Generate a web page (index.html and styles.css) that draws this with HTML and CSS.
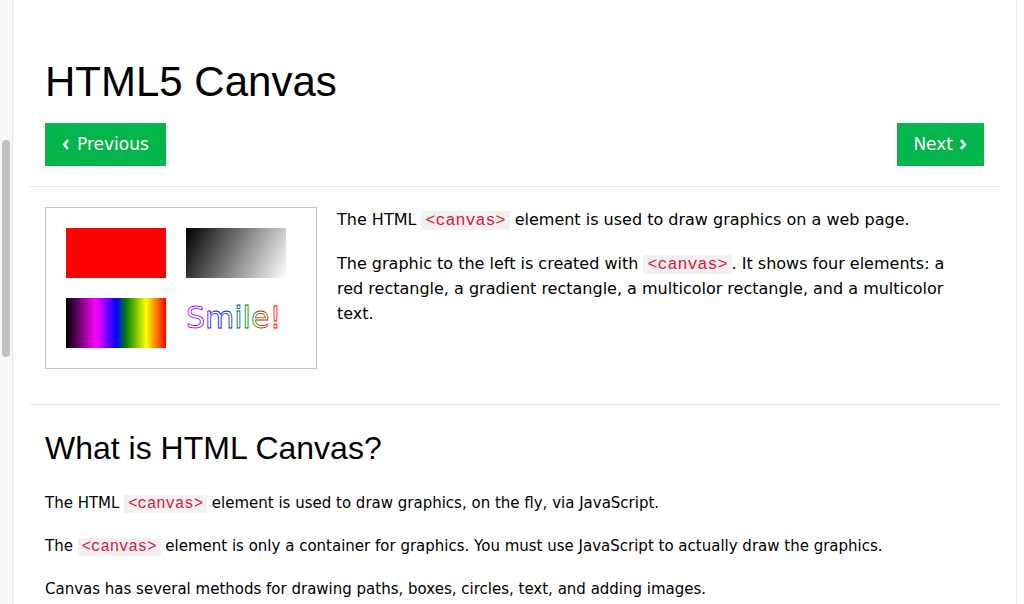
FILE: index.html
```html
<!DOCTYPE html>
<html lang="en">
<head>
<meta charset="utf-8">
<title>HTML5 Canvas</title>
<link rel="stylesheet" href="styles.css">
</head>
<body>
<div class="page">
  <aside class="gutter"><div class="thumb"></div></aside>
  <main class="main">
    <section class="intro">
      <h1>HTML5 Canvas</h1>
      <nav class="pager">
        <a class="btn btn-prev" href="#"><svg class="chev" width="8" height="11" viewBox="0 0 8 11"><path d="M6 1.2 L2.2 5.5 L6 9.8" fill="none" stroke="#fff" stroke-width="2.6"/></svg>Previous</a>
        <a class="btn btn-next" href="#">Next<svg class="chev" width="8" height="11" viewBox="0 0 8 11"><path d="M2 1.2 L5.8 5.5 L2 9.8" fill="none" stroke="#fff" stroke-width="2.6"/></svg></a>
      </nav>
    </section>
    <hr class="rule">
    <section class="demo">
      <div class="canvas-box">
        <svg width="270" height="160" viewBox="0 0 270 160">
          <defs>
            <linearGradient id="gray" gradientUnits="userSpaceOnUse" x1="140" y1="20" x2="240" y2="70">
              <stop offset="0" stop-color="#000"/>
              <stop offset="1" stop-color="#fff"/>
            </linearGradient>
            <linearGradient id="rainbow" gradientUnits="userSpaceOnUse" x1="20" y1="0" x2="120" y2="0">
              <stop offset="0" stop-color="#000"/>
              <stop offset="0.3" stop-color="#f0f"/>
              <stop offset="0.5" stop-color="#00f"/>
              <stop offset="0.6" stop-color="#008000"/>
              <stop offset="0.8" stop-color="#ff0"/>
              <stop offset="1" stop-color="#f00"/>
            </linearGradient>
            <linearGradient id="smile" gradientUnits="userSpaceOnUse" x1="140" y1="0" x2="235" y2="0">
              <stop offset="0" stop-color="#c0f"/>
              <stop offset="0.37" stop-color="#00f"/>
              <stop offset="0.65" stop-color="#008000"/>
              <stop offset="0.9" stop-color="#f00"/>
              <stop offset="1" stop-color="#f00"/>
            </linearGradient>
          </defs>
          <rect x="20" y="20" width="100" height="50" fill="#f00"/>
          <rect x="140" y="20" width="100" height="50" fill="url(#gray)"/>
          <rect x="20" y="90" width="100" height="50" fill="url(#rainbow)"/>
          <text class="smile-text" x="140" y="120" fill="none" stroke="url(#smile)" stroke-width="0.8">Smile!</text>
        </svg>
      </div>
      <div class="demo-text">
        <p>The HTML <code class="codespan">&lt;canvas&gt;</code> element is used to draw graphics on a web page.</p>
        <p>The graphic to the left is created with <code class="codespan">&lt;canvas&gt;</code>. It shows four elements: a red rectangle, a gradient rectangle, a multicolor rectangle, and a multicolor text.</p>
      </div>
    </section>
    <hr class="rule">
    <section class="content">
      <h2>What is HTML Canvas?</h2>
      <p>The HTML <code class="codespan">&lt;canvas&gt;</code> element is used to draw graphics, on the fly, via JavaScript.</p>
      <p>The <code class="codespan">&lt;canvas&gt;</code> element is only a container for graphics. You must use JavaScript to actually draw the graphics.</p>
      <p>Canvas has several methods for drawing paths, boxes, circles, text, and adding images.</p>
    </section>
  </main>
  <div class="rightbar"></div>
</div>
</body>
</html>
```
FILE: styles.css
```css
* { box-sizing: border-box; }

html, body {
  margin: 0;
  padding: 0;
  background: #fff;
}

body {
  font-family: "DejaVu Sans", Verdana, sans-serif;
  font-size: 15px;
  line-height: 25px;
  color: #000;
}

.page {
  display: flex;
  height: 604px;
  overflow: hidden;
}

.gutter {
  flex: 0 0 13px;
  background: #f8f8f8;
  border-right: 1px solid #e6e6e6;
  padding: 140px 2px 0 2px;
}

.thumb {
  width: 8px;
  height: 217px;
  background: #c1c1c1;
  border-radius: 4px;
}

.main {
  flex: 0 0 1003px;
  padding: 0 16px 0 17px;
}

.rightbar {
  flex: 1 1 auto;
  border-left: 1px solid #ececec;
  background: #fff;
}

.rule {
  margin: 0;
  border: 0;
  border-top: 1px solid #e8e8e8;
  height: 0;
}

.intro {
  padding: 58px 15px 20px 15px;
}

h1 {
  margin: 0;
  font-family: "Liberation Sans", Arial, sans-serif;
  font-weight: 400;
  font-size: 42px;
  line-height: 48px;
}

.pager {
  margin-top: 17px;
  display: flex;
  justify-content: space-between;
}

.btn {
  display: inline-flex;
  align-items: center;
  height: 43px;
  background: #03b54a;
  color: #fff;
  text-decoration: none;
  font-family: "DejaVu Sans", Verdana, sans-serif;
  font-size: 17px;
  line-height: 1;
}

.btn-prev {
  padding: 0 17px 0 17px;
  gap: 7px;
}

.btn-next {
  padding: 0 17px 0 16px;
  gap: 6px;
  margin-right: 1px;
}

.chev { display: block; }

.demo {
  display: flex;
  align-items: flex-start;
  padding: 20px 30px 35px 15px;
}

.canvas-box {
  flex: 0 0 272px;
  height: 162px;
  border: 1px solid #c3c3c3;
}

.canvas-box svg { display: block; }

.smile-text {
  font-family: "DejaVu Sans", Verdana, sans-serif;
  font-size: 30px;
}

.demo-text {
  flex: 1 1 auto;
  margin-left: 20px;
  font-size: 16px;
}

.demo-text p {
  margin: 0 0 19px 0;
}

.codespan {
  font-family: "Liberation Mono", "Courier New", monospace;
  font-size: 15.6px;
  line-height: 1;
  color: #dc143c;
  background: #f1f1f1;
  padding: 0 4px;
}

.demo-text .codespan {
  font-size: 16.7px;
}

.content {
  padding: 25px 15px 0 15px;
}

h2 {
  margin: 0 0 24px 0;
  font-family: "Liberation Sans", Arial, sans-serif;
  font-weight: 400;
  font-size: 32px;
  line-height: 37px;
}

.content p {
  margin: 0 0 18px 0;
}
```
